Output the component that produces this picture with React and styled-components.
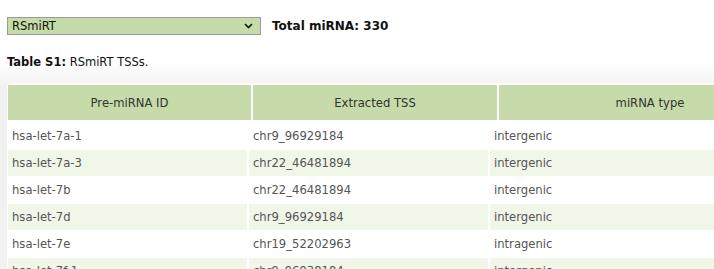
import React from 'react';
import styled, { createGlobalStyle } from 'styled-components';

const rows = [
  ['hsa-let-7a-1', 'chr9_96929184', 'intergenic'],
  ['hsa-let-7a-3', 'chr22_46481894', 'intergenic'],
  ['hsa-let-7b', 'chr22_46481894', 'intergenic'],
  ['hsa-let-7d', 'chr9_96929184', 'intergenic'],
  ['hsa-let-7e', 'chr19_52202963', 'intragenic'],
  ['hsa-let-7f-1', 'chr9_96938184', 'intergenic']
];

const App = () => {
  return (
    <Page>
      <GlobalStyle />
      <Toolbar>
        <SelectBox>
          <span>RSmiRT</span>
          <svg width="9" height="6" viewBox="0 0 9 6">
            <path d="M1 1l3.5 3.5L8 1" fill="none" stroke="#111" strokeWidth="1.6" />
          </svg>
        </SelectBox>
        <Total>Total miRNA: 330</Total>
      </Toolbar>
      <Section>
        <Caption>
          <b>Table S1:</b> RSmiRT TSSs.
        </Caption>
        <Panel>
          <HeadRow>
            <HeadCell>Pre-miRNA ID</HeadCell>
            <HeadCell>Extracted TSS</HeadCell>
            <HeadCell>miRNA type</HeadCell>
          </HeadRow>
          <Body>
            {rows.map((row, i) => (
              <BodyRow key={i} striped={i % 2 === 1}>
                {row.map((cell, j) => (
                  <Cell key={j}>{cell}</Cell>
                ))}
              </BodyRow>
            ))}
          </Body>
        </Panel>
      </Section>
    </Page>
  );
};

export default App;

const GlobalStyle = createGlobalStyle`
  html, body {
    margin: 0;
    background: #fff;
    overflow: hidden;
  }
  body {
    font-family: "DejaVu Sans", Verdana, sans-serif;
  }
`;

const Page = styled.div`
  width: 714px;
  height: 269px;
  overflow: hidden;
`;

const Toolbar = styled.div`
  display: flex;
  align-items: center;
  gap: 11px;
  padding: 17px 0 0 7px;
  height: 18px;
`;

const SelectBox = styled.div`
  box-sizing: border-box;
  width: 254px;
  height: 18px;
  display: flex;
  align-items: center;
  justify-content: space-between;
  padding: 0 7px 0 4px;
  background: #c5dba8;
  border: 1px solid #9a9a9a;
  font-size: 11.5px;
  color: #111;
  svg {
    display: block;
  }
`;

const Total = styled.div`
  font-size: 12px;
  font-weight: bold;
  color: #111;
`;

const Section = styled.div`
  margin-top: 5px;
  padding: 15px 0 0 7px;
  background: linear-gradient(#fff 0, #fff 22px, #f1f1f1 48px, #f2f2f2 100%);
  height: 240px;
`;

const Caption = styled.div`
  font-size: 11.5px;
  line-height: 14px;
  color: #111;
  b {
    font-weight: bold;
  }
`;

const Panel = styled.div`
  margin-top: 14px;
  width: 820px;
  padding: 2px 0 0 1px;
  background: #fff;
  border-radius: 5px 0 0 0;
  height: 220px;
`;

const HeadRow = styled.div`
  display: grid;
  grid-template-columns: 243px 244px 302px;
  column-gap: 2px;
  height: 35px;
`;

const HeadCell = styled.div`
  display: flex;
  align-items: center;
  justify-content: center;
  background: #c6dba9;
  color: #333;
  font-size: 11.6px;
`;

const Body = styled.div`
  display: flex;
  flex-direction: column;
  row-gap: 1px;
  padding-top: 3px;
`;

const BodyRow = styled.div`
  display: grid;
  grid-template-columns: 239px 239px 302px;
  column-gap: 2px;
  height: 26px;
  & > div {
    background: ${p => (p.striped ? '#f0f6e8' : '#fff')};
  }
`;

const Cell = styled.div`
  display: flex;
  align-items: center;
  padding-left: 4px;
  color: #555;
  font-size: 11.6px;
`;
